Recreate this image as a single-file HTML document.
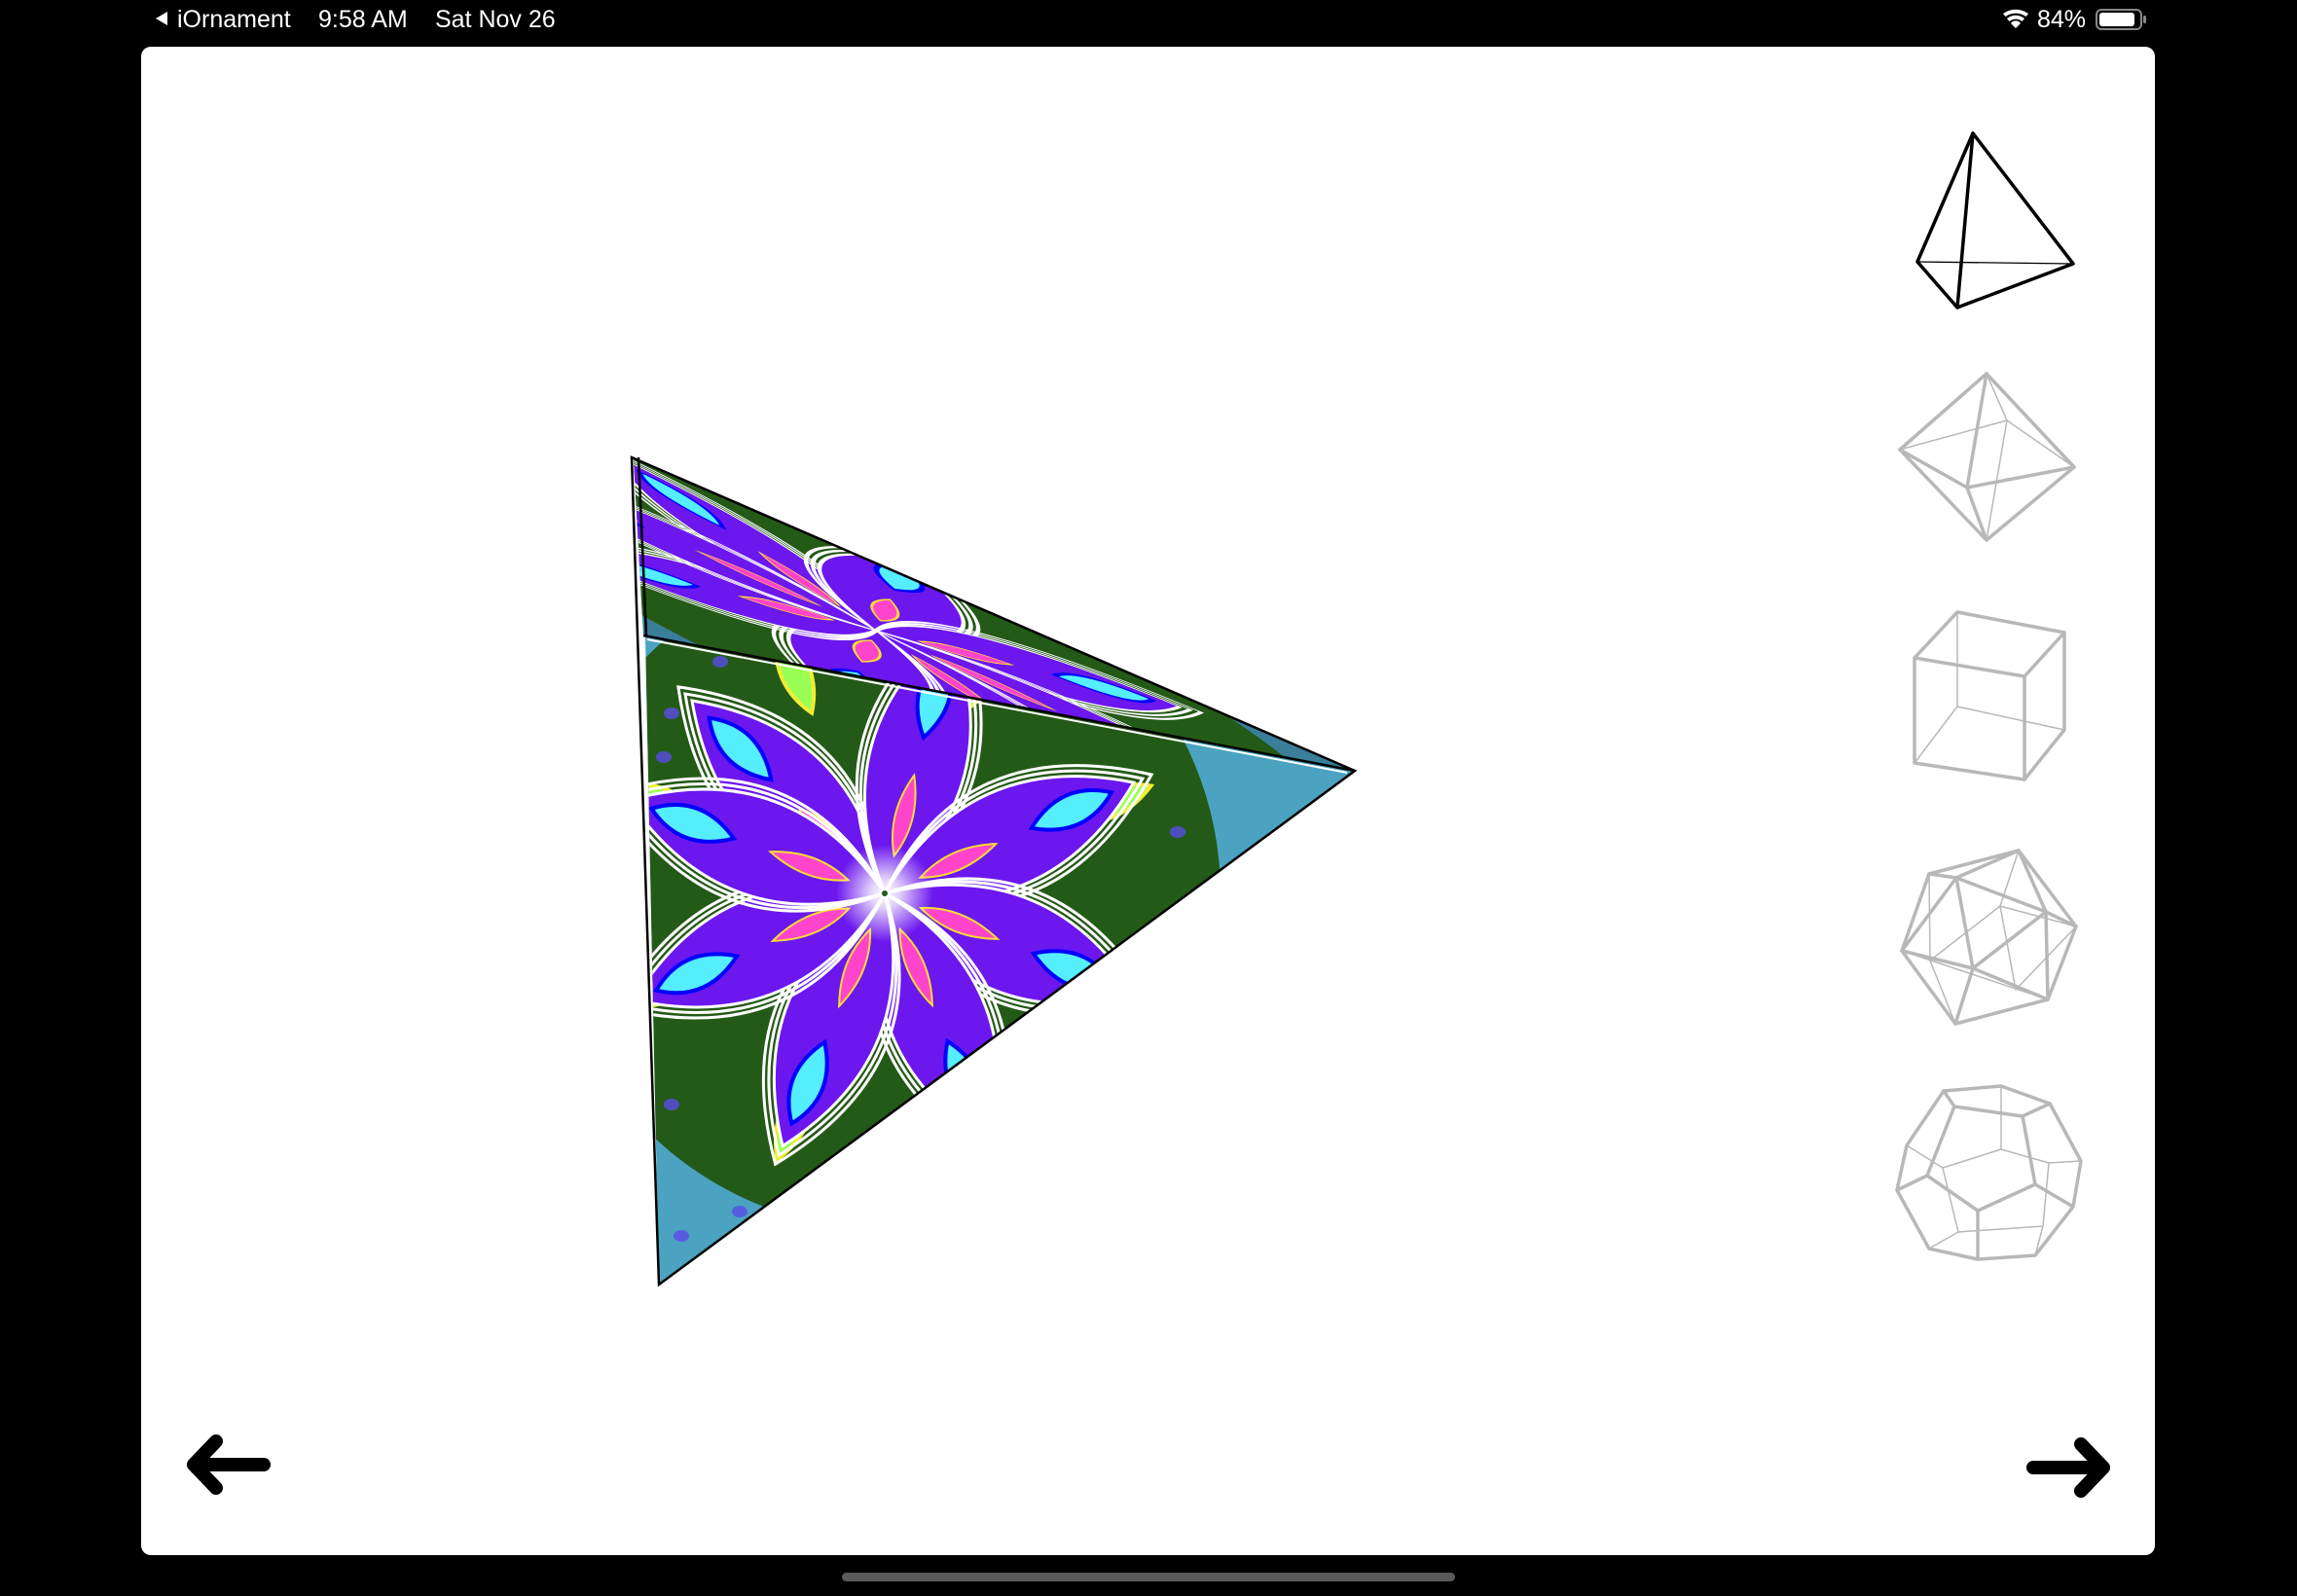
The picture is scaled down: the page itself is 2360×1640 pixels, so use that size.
<!DOCTYPE html>
<html><head><meta charset="utf-8"><style>
html,body{margin:0;padding:0;background:#000;width:2360px;height:1640px;overflow:hidden}
svg{display:block}
text{font-family:"Liberation Sans",sans-serif;fill:#fff}
</style></head><body>
<svg width="2360" height="1640" viewBox="0 0 2360 1640" xmlns="http://www.w3.org/2000/svg">
<defs>
<clipPath id="bot"><polygon points="663,653 1392,792 677,1320"/></clipPath>
<clipPath id="top"><polygon points="651,472 1392,792 661,653"/></clipPath>
<radialGradient id="cen" cx="0.5" cy="0.5" r="0.5"><stop offset="0" stop-color="#fff"/><stop offset="0.3" stop-color="#fff" stop-opacity="0.8"/><stop offset="1" stop-color="#fff" stop-opacity="0"/></radialGradient>
<g id="petal">
<path d="M0,0 Q140,-120 300,0 Q140,120 0,0z" fill="none" stroke="#fff" stroke-width="3"/>
<path d="M0,0 Q140,-110 290,0 Q140,110 0,0z" fill="none" stroke="#fff" stroke-width="3"/>
<path d="M0,0 Q140,-100 280,0 Q140,100 0,0z" fill="#6b17ee" stroke="#fff" stroke-width="3"/>
<path d="M165,0 Q212,-32 255,0 Q212,32 165,0z" fill="#5ef" stroke="#00f" stroke-width="4"/>
<path d="M40,0 Q80,-18 125,0 Q80,18 40,0z" fill="#f4c" stroke="#fd3" stroke-width="2"/>
</g>
<g id="leaf"><path d="M200,0 Q245,-30 295,0 Q245,30 200,0z" fill="#9f5" stroke="#ee3" stroke-width="4"/></g>
</defs>
<rect x="0" y="0" width="2360" height="1640" fill="#000"/>
<polygon points="160,19 172,12 172,26" fill="#fff"/>
<text x="182" y="28" font-size="25">iOrnament</text>
<text x="327" y="28" font-size="25">9:58 AM</text>
<text x="447" y="28" font-size="25">Sat Nov 26</text>
<g fill="#fff">
<path d="M2058,14 a22,22 0 0 1 26,0 l-2.5,3 a18,18 0 0 0 -21,0z"/>
<path d="M2062,19 a14,14 0 0 1 18,0 l-2.5,3 a10,10 0 0 0 -13,0z"/>
<path d="M2066,24 a6,6 0 0 1 10,0 l-5,5z"/>
</g>
<text x="2093" y="28" font-size="25">84%</text>
<rect x="2154" y="10" width="46" height="20" rx="5" fill="none" stroke="#888" stroke-width="2"/>
<rect x="2157" y="13" width="36" height="14" rx="3" fill="#fff"/>
<rect x="2202" y="16" width="3" height="8" rx="1.5" fill="#888"/>
<rect x="145" y="48" width="2069" height="1550" rx="10" fill="#fff"/>
<g clip-path="url(#bot)">
<rect x="600" y="600" width="820" height="760" fill="#4ba3c1"/>
<circle cx="909" cy="918" r="345" fill="#245a17"/>
<g transform="translate(909,918)">
<g transform="rotate(-112)"><use href="#leaf"/></g>
<g transform="rotate(-67)"><use href="#leaf"/></g>
<g transform="rotate(-22)"><use href="#leaf"/></g>
<g transform="rotate(22)"><use href="#leaf"/></g>
<g transform="rotate(67)"><use href="#leaf"/></g>
<g transform="rotate(112)"><use href="#leaf"/></g>
<g transform="rotate(157)"><use href="#leaf"/></g>
<g transform="rotate(202)"><use href="#leaf"/></g>
<g transform="rotate(-135)"><use href="#petal"/></g>
<g transform="rotate(-76)"><use href="#petal"/></g>
<g transform="rotate(-24)"><use href="#petal"/></g>
<g transform="rotate(22)"><use href="#petal"/></g>
<g transform="rotate(67)"><use href="#petal"/></g>
<g transform="rotate(112)"><use href="#petal"/></g>
<g transform="rotate(157)"><use href="#petal"/></g>
<g transform="rotate(200)"><use href="#petal"/></g>
<circle r="50" fill="url(#cen)"/>
<circle r="3" fill="#245a17"/>
</g>
<g fill="#5a4be8" opacity="0.8">
<ellipse cx="690" cy="733" rx="8" ry="6"/><ellipse cx="682" cy="778" rx="8" ry="6"/><ellipse cx="740" cy="680" rx="8" ry="6"/>
<ellipse cx="1225" cy="749" rx="8" ry="6"/><ellipse cx="1265" cy="740" rx="8" ry="6"/><ellipse cx="1210" cy="855" rx="8" ry="6"/>
<ellipse cx="690" cy="1135" rx="8" ry="6"/><ellipse cx="700" cy="1270" rx="8" ry="6"/><ellipse cx="760" cy="1245" rx="8" ry="6"/>
</g>
</g>
<g clip-path="url(#top)">
<rect x="640" y="460" width="770" height="340" fill="#3a7e9a"/>
<g transform="translate(900,648) rotate(24) scale(1.6,0.28)">
<circle r="330" fill="#245a17"/>
<g transform="rotate(-135)"><use href="#petal"/></g>
<g transform="rotate(-90)"><use href="#petal"/></g>
<g transform="rotate(-45)"><use href="#petal"/></g>
<g transform="rotate(0)"><use href="#petal"/></g>
<g transform="rotate(45)"><use href="#petal"/></g>
<g transform="rotate(90)"><use href="#petal"/></g>
<g transform="rotate(135)"><use href="#petal"/></g>
<g transform="rotate(180)"><use href="#petal"/></g>
</g>
</g>
<g fill="none" stroke="#000" stroke-width="2.5" stroke-linejoin="miter">
<polygon points="649,470 1392,792 677,1320"/>
<line x1="661" y1="653" x2="1392" y2="792"/>
<line x1="656" y1="470" x2="664" y2="653"/>
</g>
<g fill="none" stroke="#fff" stroke-width="2"><line x1="665" y1="657" x2="1384" y2="794"/></g>
<g fill="none" stroke="#000" stroke-linejoin="round" stroke-linecap="round">
<line x1="1970" y1="269" x2="2130" y2="271" stroke-width="1.3"/>
<g stroke-width="3.5"><polygon points="2027,137 1970,269 2011,316 2130,271"/><line x1="2027" y1="137" x2="2011" y2="316"/></g>
</g>
<g fill="none" stroke="#b8b8b8" stroke-linejoin="round" stroke-linecap="round">
<g stroke-width="1.5"><line x1="2041" y1="384" x2="2062" y2="432"/><line x1="1952" y1="462" x2="2062" y2="432"/><line x1="2131" y1="480" x2="2062" y2="432"/><line x1="2041" y1="555" x2="2062" y2="432"/></g>
<g stroke-width="3.5"><polygon points="2041,384 1952,462 2041,555 2131,480"/><line x1="2041" y1="384" x2="2021" y2="501"/><line x1="1952" y1="462" x2="2021" y2="501"/><line x1="2131" y1="480" x2="2021" y2="501"/><line x1="2041" y1="555" x2="2021" y2="501"/></g>
</g>
<g fill="none" stroke="#b8b8b8" stroke-linejoin="round" stroke-linecap="round">
<g stroke-width="1.5"><line x1="2011" y1="629" x2="2011" y2="726"/><line x1="2011" y1="726" x2="1967" y2="784"/><line x1="2011" y1="726" x2="2121" y2="750"/></g>
<g stroke-width="3.5"><polygon points="2011,629 2121,650 2121,750 2080,801 1967,784 1967,676"/><polyline points="1967,676 2080,695 2121,650"/><line x1="2080" y1="695" x2="2080" y2="801"/></g>
</g>
<g fill="none" stroke="#b8b8b8" stroke-linejoin="round" stroke-linecap="round">
<g stroke-width="1.5"><line x1="1982" y1="898" x2="1983" y2="987"/><line x1="1954" y1="977" x2="2104" y2="1027"/><line x1="1983" y1="987" x2="2009" y2="1052"/><line x1="1983" y1="987" x2="2055" y2="931"/><line x1="2074" y1="874" x2="2055" y2="931"/><line x1="2055" y1="931" x2="2133" y2="952"/><line x1="2055" y1="931" x2="2071" y2="1017"/><line x1="2071" y1="1017" x2="2133" y2="952"/></g>
<g stroke-width="3.5"><polygon points="1982,898 2074,874 2133,952 2104,1027 2009,1052 1954,977"/><polyline points="1954,977 2010,902 2027,995 2009,1052"/><line x1="2010" y1="902" x2="2074" y2="874"/><line x1="2010" y1="902" x2="1982" y2="898"/><line x1="1954" y1="977" x2="2027" y2="995"/><line x1="2027" y1="995" x2="2104" y2="1027"/><line x1="2027" y1="995" x2="2102" y2="937"/><line x1="2010" y1="902" x2="2102" y2="937"/><line x1="2102" y1="937" x2="2104" y2="1027"/><line x1="2102" y1="937" x2="2133" y2="952"/><line x1="2074" y1="874" x2="2102" y2="937"/></g>
</g>
<g fill="none" stroke="#b8b8b8" stroke-linejoin="round" stroke-linecap="round">
<g stroke-width="1.5"><polygon points="1996,1200 2056,1181 2105,1195 2099,1260 2012,1266"/><line x1="1996" y1="1200" x2="1959" y2="1177"/><line x1="2056" y1="1181" x2="2056" y2="1116"/><line x1="2105" y1="1195" x2="2138" y2="1193"/><line x1="2099" y1="1260" x2="2091" y2="1290"/><line x1="2012" y1="1266" x2="1982" y2="1283"/></g>
<g stroke-width="3.5"><polygon points="1997,1121 2056,1116 2106,1134 2138,1193 2130,1240 2091,1290 2032,1294 1982,1283 1949,1223 1959,1177"/><polygon points="2008,1137 2078,1147 2091,1217 2032,1244 1980,1208"/><line x1="1997" y1="1121" x2="2008" y2="1137"/><line x1="2106" y1="1134" x2="2078" y2="1147"/><line x1="2130" y1="1240" x2="2091" y2="1217"/><line x1="2032" y1="1294" x2="2032" y2="1244"/><line x1="1949" y1="1223" x2="1980" y2="1208"/></g>
</g>
<g fill="none" stroke="#000" stroke-width="14" stroke-linecap="round" stroke-linejoin="round">
<line x1="200" y1="1505" x2="271" y2="1505"/><polyline points="222,1481 199,1505 222,1529"/>
<line x1="2160" y1="1508" x2="2089" y2="1508"/><polyline points="2138,1484 2161,1508 2138,1532"/>
</g>
<rect x="865" y="1616" width="630" height="9" rx="4.5" fill="#5a5a5a"/>
</svg>
</body></html>
